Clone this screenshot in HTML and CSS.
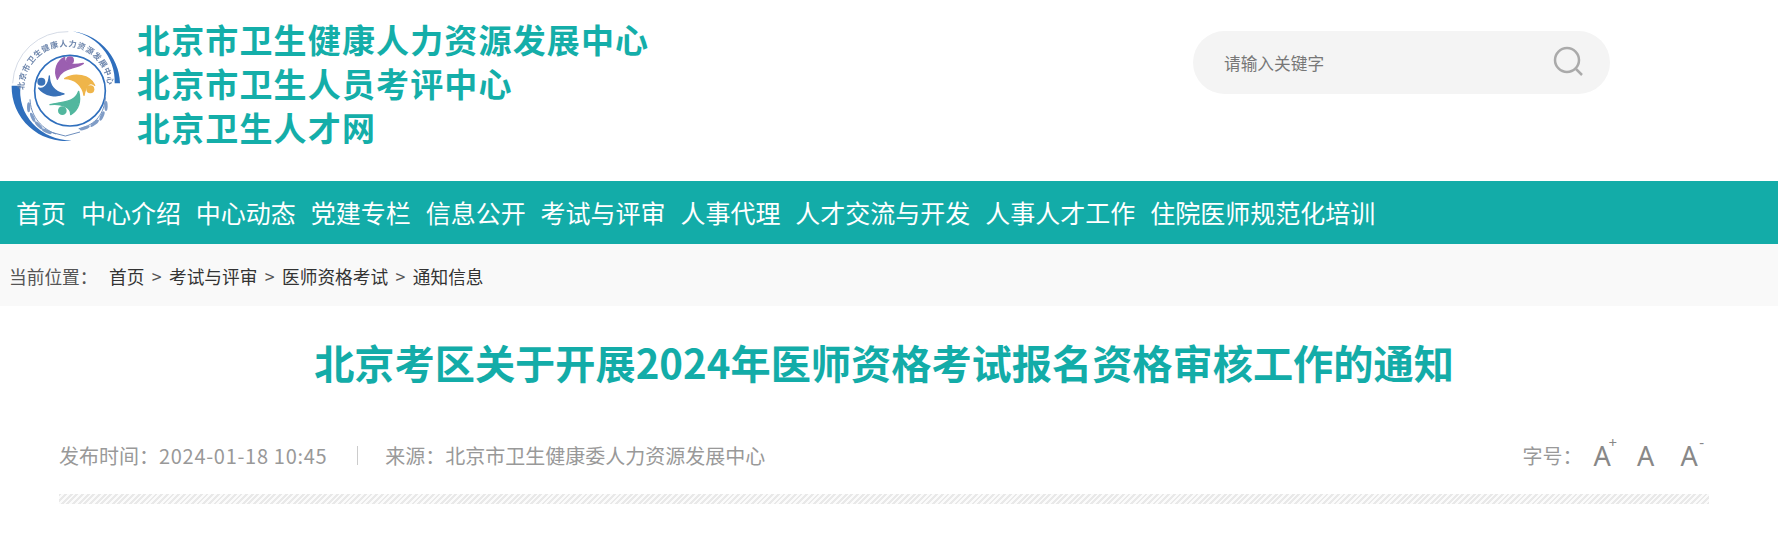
FILE: index.html
```html
<!DOCTYPE html>
<html lang="zh-CN">
<head>
    <meta charset="UTF-8">
    <meta name="viewport" content="width=device-width, initial-scale=1.0">
    <title>北京卫生人才网</title>
    <link rel="stylesheet" href="styles.css">
</head>
<body>
    <header class="header">
        <svg class="logo" viewBox="30 27 336 342" width="112" height="114" aria-hidden="true">
            <defs>
                <path id="logoTextPath" d="M72 210 A126 128 0 0 1 324 204"></path>
            </defs>
            <!-- outer ring -->
            <path class="ring-light" d="M38 190 A162 162 0 0 1 205 35"></path>
            <path class="ring-band" d="M35 197 A162 162 0 0 0 215 362 A158 146 0 0 1 62 197 Z"></path>
            <path class="ring-band" d="M205 33 A162 162 0 0 1 360 190 L344 190 A150 152 0 0 0 205 33 Z"></path>
            <text class="logo-text"><textPath href="#logoTextPath" textLength="390">北京市卫生健康人力资源发展中心</textPath></text>
            <!-- inner ring -->
            <circle class="ring-inner" cx="210" cy="212" r="106"></circle>
            <!-- figures -->
            <g class="figures">
                <path fill="#9b5fb0" stroke="#9b5fb0" d="M172 178 C160 150 172 122 194 112 C192 126 206 140 250 130 C222 150 186 140 172 178 Z"></path>
                <circle fill="#9b5fb0" cx="210" cy="121" r="12"></circle>
                <path fill="#efb54a" stroke="#efb54a" d="M194 176 C222 158 270 164 284 196 C270 182 258 196 252 226 C248 198 226 176 194 176 Z"></path>
                <circle fill="#efb54a" cx="271" cy="208" r="12"></circle>
                <path fill="#52b79e" stroke="#52b79e" d="M236 214 C244 246 234 270 212 284 C214 262 186 250 150 254 C186 244 224 250 236 214 Z"></path>
                <circle fill="#52b79e" cx="187" cy="272" r="13"></circle>
                <path fill="#3a72b8" stroke="#3a72b8" d="M148 168 C148 194 160 214 192 222 C170 232 134 228 116 204 C130 210 146 196 148 168 Z"></path>
                <circle fill="#3a72b8" cx="124" cy="185" r="12"></circle>
            </g>
            <!-- wreath -->
            <g class="wreath">
                <path d="M90 238 C92 282 116 322 168 342"></path>
                <path d="M316 232 C314 278 288 316 236 326"></path>
                <path d="M150 336 L196 348 L240 336"></path>
            </g>
            <g class="leaves">
                <ellipse cx="86" cy="262" rx="5" ry="15"></ellipse>
                <ellipse cx="98" cy="292" rx="5" ry="15" transform="rotate(-25 98 292)"></ellipse>
                <ellipse cx="116" cy="316" rx="5" ry="16" transform="rotate(-45 116 316)"></ellipse>
                <ellipse cx="140" cy="334" rx="5" ry="16" transform="rotate(-65 140 334)"></ellipse>
                <ellipse cx="318" cy="258" rx="5" ry="15"></ellipse>
                <ellipse cx="306" cy="288" rx="5" ry="15" transform="rotate(25 306 288)"></ellipse>
                <ellipse cx="284" cy="310" rx="5" ry="16" transform="rotate(50 284 310)"></ellipse>
                <ellipse cx="254" cy="324" rx="5" ry="16" transform="rotate(72 254 324)"></ellipse>
            </g>
        </svg>
        <div class="brand">
            <div>北京市卫生健康人力资源发展中心</div>
            <div>北京市卫生人员考评中心</div>
            <div>北京卫生人才网</div>
        </div>
        <div class="search">
            <span class="search-hint">请输入关键字</span>
            <svg class="search-icon" viewBox="0 0 32 32" width="32" height="32" aria-hidden="true">
                <circle cx="14" cy="14" r="12"></circle>
                <path d="M23 23 L29 29"></path>
            </svg>
        </div>
    </header>

    <nav class="nav">
        <a href="#">首页</a>
        <a href="#">中心介绍</a>
        <a href="#">中心动态</a>
        <a href="#">党建专栏</a>
        <a href="#">信息公开</a>
        <a href="#">考试与评审</a>
        <a href="#">人事代理</a>
        <a href="#">人才交流与开发</a>
        <a href="#">人事人才工作</a>
        <a href="#">住院医师规范化培训</a>
    </nav>

    <div class="crumb">
        <span class="crumb-label">当前位置：</span>
        <a href="#">首页</a><span class="crumb-sep">&gt;</span>
        <a href="#">考试与评审</a><span class="crumb-sep">&gt;</span>
        <a href="#">医师资格考试</a><span class="crumb-sep">&gt;</span>
        <a href="#">通知信息</a>
    </div>

    <main class="article">
        <h1 class="article-title">北京考区关于开展2024年医师资格考试报名资格审核工作的通知</h1>
        <div class="meta">
            <div class="meta-left">
                <span>发布时间：<span class="meta-date">2024-01-18 10:45</span></span>
                <span class="meta-line"></span>
                <span>来源：北京市卫生健康委人力资源发展中心</span>
            </div>
            <div class="meta-right">
                <span class="size-label">字号：</span>
                <span class="size-btn">A<i class="size-mark">+</i></span>
                <span class="size-btn">A</span>
                <span class="size-btn">A<i class="size-mark">-</i></span>
            </div>
        </div>
        <div class="hatch"></div>
    </main>
</body>
</html>
```

FILE: styles.css
```css
html, body {
    margin: 0;
    padding: 0;
    background-color: #fff;
    overflow: hidden;
}
body {
    font-family: "Noto Sans CJK SC", "Noto Sans", sans-serif;
    height: 534px;
}
a {
    color: inherit;
    text-decoration: none;
}

/* header */
.header {
    display: flex;
    align-items: center;
    height: 181px;
    padding: 0 168px 0 10px;
    box-sizing: border-box;
}
.logo {
    flex: none;
    margin-top: -9px;
    filter: blur(0.4px);
}
.ring-light {
    fill: none;
    stroke: #d5dbe6;
    stroke-width: 3;
}
.ring-band {
    fill: #2f6fbd;
}
.ring-inner {
    fill: none;
    stroke: #2f6fbd;
    stroke-width: 5;
}
.logo-text {
    font-size: 24px;
    font-weight: bold;
    fill: #6f87ad;
}
.figures path {
    stroke-width: 4;
    stroke-linejoin: round;
}
.wreath path {
    fill: none;
    stroke: #6f8fbd;
    stroke-width: 3;
}
.leaves ellipse {
    fill: #7f9cc6;
}
.brand {
    margin-left: 15px;
    margin-top: -15px;
    color: #14aea9;
    font-size: 33px;
    font-weight: bold;
    letter-spacing: 1.15px;
    line-height: 44px;
}
.search {
    display: flex;
    align-items: center;
    justify-content: space-between;
    width: 417px;
    height: 63px;
    margin-left: auto;
    margin-top: -57px;
    padding: 0 25px 0 31px;
    box-sizing: border-box;
    border-radius: 32px;
    background-color: #f4f4f4;
}
.search-hint {
    color: #777;
    font-size: 16.7px;
    line-height: 26px;
    padding-top: 2px;
}
.search-icon circle, .search-icon path {
    fill: none;
    stroke: #aaa;
    stroke-width: 2.5;
}

/* nav */
.nav {
    display: flex;
    gap: 14.9px;
    height: 63px;
    padding-left: 16px;
    background-color: #13aca8;
    color: #fff;
    font-size: 25px;
    line-height: 62px;
}

/* breadcrumb */
.crumb {
    display: flex;
    height: 62px;
    padding-left: 9px;
    background-color: #f9f9f9;
    color: #333;
    font-size: 17.7px;
    line-height: 64px;
}
.crumb-label {
    color: #555;
    margin-right: 11.5px;
}
.crumb-sep {
    margin: 0 7.4px;
    color: #555;
}

/* article head */
.article {
    padding: 26px 69px 0 59px;
}
.article-title {
    margin: 0;
    color: #13aca8;
    font-size: 40.2px;
    font-weight: bold;
    line-height: 60px;
    text-align: center;
}
.meta {
    display: flex;
    align-items: center;
    justify-content: space-between;
    height: 40px;
    margin-top: 43px;
    color: #999;
    font-size: 20px;
}
.meta-left {
    display: flex;
    align-items: center;
}
.meta-date {
    letter-spacing: 0.7px;
}
.meta-line {
    width: 1px;
    height: 19px;
    margin: 0 27px 0 30px;
    background-color: #ccc;
}
.meta-right {
    display: flex;
    align-items: center;
    margin-right: -2px;
}
.size-label {
    margin-right: -2px;
}
.size-btn {
    position: relative;
    width: 43.5px;
    font-family: "Noto Sans", sans-serif;
    font-size: 27px;
    text-align: center;
    color: #888;
}
.size-mark {
    position: absolute;
    top: -3px;
    right: 7px;
    font-size: 15px;
    font-style: normal;
    line-height: 16px;
}
.hatch {
    height: 10px;
    margin-top: 19px;
    background-image: repeating-linear-gradient(135deg, #e9e9e9 0, #e9e9e9 2px, #fbfbfb 2px, #fbfbfb 4px);
}
```
